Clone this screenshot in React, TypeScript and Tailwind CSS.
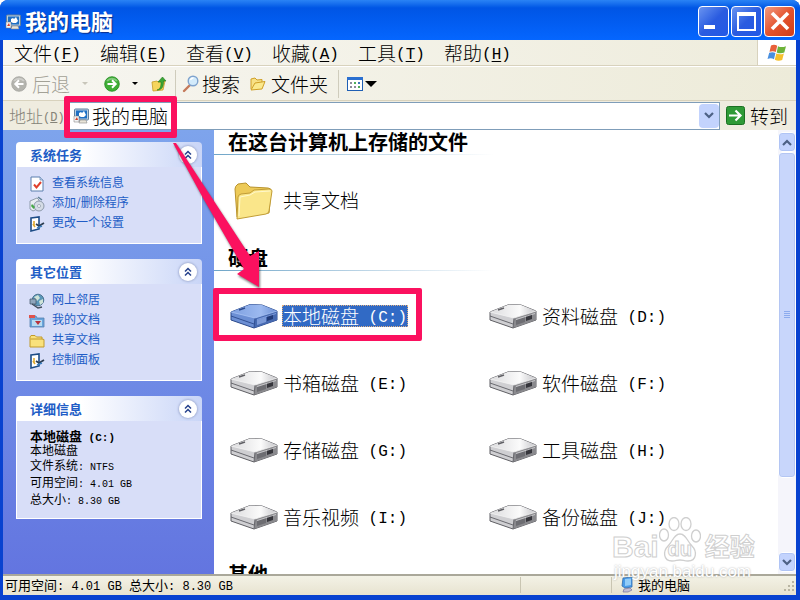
import React from "react";

const cjk = "font-['Noto_Sans_CJK_SC',sans-serif] font-light";

function Mono({ children, size = "text-[16px] align-[2px]" }: { children: React.ReactNode; size?: string }) {
  return (
    <span className={"font-['Liberation_Mono','Noto_Sans_CJK_SC',monospace] leading-none whitespace-pre " + size}>
      {children}
    </span>
  );
}

function ComputerIcon({ className }: { className: string }) {
  return (
    <svg viewBox="0 0 16 16" className={className} aria-hidden="true">
      <rect x="1.500" y="1" width="14" height="11" rx="1" fill="#b9cfe3" stroke="#5f7f9f" />
      <rect x="3" y="2.500" width="11" height="8" fill="#1d6fc4" />
      <path d="M6 5l2-1 1 1 2-2 1 2 1 2-2 2H8L6 8z" fill="#fff" />
      <path d="M7 12h6l1 3H6z" fill="#e8e4d8" stroke="#888" strokeWidth=".6" />
      <path d="M1 8h5v6H1z" fill="#f4f4f4" stroke="#777" strokeWidth=".5" />
      <path d="M2 12l2-3 1 3z" fill="#d6402b" />
    </svg>
  );
}

function RoundArrow({ green }: { green?: boolean }) {
  return (
    <svg viewBox="0 0 16 16" className="size-4 shrink-0" aria-hidden="true">
      <circle cx="8" cy="8" r="7.300" fill={green ? "#3fae36" : "#b4b4ae"} stroke={green ? "#1f8a1c" : "#a5a5a0"} strokeWidth=".8" />
      <path d="M3 5a6 5 0 0 1 10 0" stroke="#fff" strokeOpacity=".35" strokeWidth="2" fill="none" />
      <path d={green ? "M3.500 8h8M8 4.300L11.700 8 8 11.700" : "M12.500 8h-8M8 4.300L4.300 8 8 11.700"} stroke="#fff" strokeWidth="2" fill="none" />
    </svg>
  );
}

function Caret({ className, size }: { className: string; size: string }) {
  return (
    <svg viewBox="0 0 10 5" className={size + " shrink-0 " + className} aria-hidden="true">
      <path d="M0 0h10L5 5z" fill="currentColor" />
    </svg>
  );
}

function UpFolderIcon() {
  return (
    <svg viewBox="0 0 18 18" className="size-[18px] shrink-0" aria-hidden="true">
      <path d="M2 7l5-1 1 1 7-1-2 9-10 1z" fill="#f5d55c" stroke="#c59a24" strokeWidth=".8" />
      <path d="M7 15c4-1 4-5 4-8H8l4.500-5L16 6h-2.500c0 5-1 9-6.500 9z" fill="#3da637" stroke="#1e7a1c" strokeWidth=".6" />
    </svg>
  );
}

function SearchIcon() {
  return (
    <svg viewBox="0 0 18 18" className="size-[18px] shrink-0" aria-hidden="true">
      <path d="M8 10l-6 6" stroke="#c4795a" strokeWidth="2.400" strokeLinecap="round" />
      <circle cx="11" cy="6" r="4.800" fill="#d3ebfb" stroke="#7fa3cd" strokeWidth="1.400" />
      <path d="M8.500 5a3 3 0 0 1 3-2" stroke="#fff" strokeWidth="1.300" fill="none" />
    </svg>
  );
}

function OpenFolderIcon() {
  return (
    <svg viewBox="0 0 18 16" className="h-4 w-[18px] shrink-0" aria-hidden="true">
      <path d="M2 13V3l4-1 2 2 5-.500V7" fill="#f8e186" stroke="#cf9f26" />
      <path d="M2 14l4-7 10-1.500L13 13z" fill="#fbe98d" stroke="#cf9f26" />
    </svg>
  );
}

function ViewsIcon() {
  return (
    <svg viewBox="0 0 16 14" className="h-[14px] w-4 shrink-0" aria-hidden="true">
      <rect x=".5" y=".5" width="15" height="13" fill="#fff" stroke="#1f5fb4" />
      <path d="M0 0h16v3H0z" fill="#2a6fd0" />
      <path d="M3 5h2v2H3zM3 9h2v2H3zM7 9h2v2H7z" fill="#8c8c9c" />
      <path d="M7 5h2v2H7zM11 9h2v2h-2z" fill="#4fae58" />
      <path d="M11 5h2v2h-2z" fill="#3b76b8" />
    </svg>
  );
}

function WindowsFlag() {
  return (
    <svg viewBox="0 0 20 18" className="h-[18px] w-5" aria-hidden="true">
      <path d="M4 1.500c2.500-1.200 4.500-.8 6.200.2L8.800 8C7 7 5 6.800 2.500 7.800z" fill="#e8603a" />
      <path d="M11 2.200c2 1 4.500 1.400 8 0L17.300 8.500c-2.800 1.200-5.300 1-7.600-.1z" fill="#6db33a" />
      <path d="M2.200 8.800c2.500-1 4.500-.8 6.200.2L7 15.200c-2-1-4-1.300-6.500-.2z" fill="#4a8fdf" />
      <path d="M9.300 9.500c2.300 1 4.800 1.200 7.600 0L15.200 16c-2.700 1-5.200.8-7.400-.3z" fill="#f6c02d" />
    </svg>
  );
}

function Chevron({ up }: { up?: boolean }) {
  return (
    <svg viewBox="0 0 10 7" className="h-[7px] w-[10px]" aria-hidden="true">
      <path d={up ? "M1 6l4-4 4 4" : "M1 1l4 4 4-4"} stroke="#4d6185" strokeWidth="2.200" fill="none" />
    </svg>
  );
}

type TaskKind = "check" | "disc" | "panel" | "globe" | "docs" | "folder";

function TaskIcon({ kind }: { kind: TaskKind }) {
  return (
    <svg viewBox="0 0 16 16" className="size-4 shrink-0" aria-hidden="true">
      {kind === "check" && (
        <>
          <path d="M2 1h9l3 3v11H2z" fill="#fff" stroke="#5b7fae" />
          <path d="M11 1v3h3" fill="#c8d8ee" stroke="#5b7fae" strokeWidth=".7" />
          <path d="M5 8.500l2.500 3L12 6" stroke="#e0402c" strokeWidth="2" fill="none" />
        </>
      )}
      {kind === "disc" && (
        <>
          <path d="M1 5l7-3 2 2v8l-6 3-3-2z" fill="#e9eef2" stroke="#7b8a98" strokeWidth=".8" />
          <circle cx="10" cy="10" r="5" fill="#d5dce6" stroke="#7a8898" strokeWidth=".8" />
          <circle cx="10" cy="10" r="1.500" fill="#fff" stroke="#7a8898" strokeWidth=".6" />
          <path d="M3 8l3 3-1.500 2L2 10z" fill="#45a845" />
          <path d="M9 1l4 3" stroke="#5e7f94" strokeWidth="1.500" />
        </>
      )}
      {kind === "panel" && (
        <>
          <path d="M2 2l8-1v12l-8 2z" fill="#fff" stroke="#1d4c86" strokeWidth="1.600" />
          <path d="M5 5v5M4 8l2 3" stroke="#e0a92c" strokeWidth="1.600" />
          <path d="M7 8l3 2 5-3" stroke="#2d3f52" strokeWidth="1.800" fill="none" />
          <path d="M8 12l5-2" stroke="#3c80c0" strokeWidth="1.500" />
        </>
      )}
      {kind === "globe" && (
        <>
          <circle cx="9" cy="7" r="5.800" fill="#5b97b8" stroke="#3c6480" strokeWidth=".8" />
          <path d="M5 4l4-2 2 3-3 3zM10 8l4-2v4l-3 2z" fill="#cfe3d8" />
          <path d="M1 6h6v5H1z" fill="#8fa5bb" stroke="#405468" strokeWidth=".7" />
          <path d="M3 11l6 4 4-1" stroke="#444f5c" strokeWidth="1.500" fill="none" />
        </>
      )}
      {kind === "docs" && (
        <>
          <path d="M1 3h6l1 2h7v9H1z" fill="#6aa5dc" stroke="#5580ad" strokeWidth=".8" />
          <path d="M0 2h6v3H0z" fill="#e0524c" />
          <path d="M3 7h10v6H3z" fill="#b7dcf2" />
          <path d="M6 8h6l-3 4z" fill="#b8333c" />
        </>
      )}
      {kind === "folder" && (
        <path d="M1 14V4l1-1.500h4L7.500 4H13v2l2 .5V14zM1.500 6H13" fill="#f9e17c" stroke="#c19a2c" strokeLinejoin="round" />
      )}
    </svg>
  );
}

function Panel({ title, children }: { title: string; children: React.ReactNode }) {
  return (
    <section className="overflow-hidden rounded-t">
      <header className="flex h-[25px] items-center justify-between bg-linear-to-r from-white from-35% to-[#c9d5f7] pr-[5px] pl-[14px]">
        <h2 className="text-[13px] leading-5 font-bold text-[#215dc6]">{title}</h2>
        <button
          aria-label={"收起" + title}
          className="flex size-[18px] items-center justify-center rounded-full bg-white shadow-[0_0_2px_1px_#a9b5d8]"
        >
          <svg viewBox="0 0 8 10" className="h-[10px] w-2" aria-hidden="true">
            <path d="M1 4.500l3-3 3 3M1 8.500l3-3 3 3" stroke="#26418c" strokeWidth="1.500" fill="none" />
          </svg>
        </button>
      </header>
      <div className="border border-t-0 border-white bg-[#d8def8]">{children}</div>
    </section>
  );
}

function TaskList({ items }: { items: { kind: TaskKind; label: string }[] }) {
  return (
    <ul className="pt-[5px] pb-[11px] pl-3">
      {items.map((item) => (
        <li key={item.label} className="flex h-5 items-center">
          <a href="#" className="flex items-center gap-[7px] text-[12px] leading-5 font-normal text-[#215dc6]">
            <span className="pt-1"><TaskIcon kind={item.kind} /></span>
            {item.label}
          </a>
        </li>
      ))}
    </ul>
  );
}

function DriveIcon({ selected }: { selected?: boolean }) {
  const id = selected ? "drive-top-selected" : "drive-top";
  const left = selected ? "#6c8fd4" : "#cfcfd2";
  const right = selected ? "#4669b0" : "#8a8a8e";
  const line = selected ? "#2b4a8c" : "#5f5f64";
  return (
    <svg viewBox="0 0 48 26" className="h-[26px] w-12 shrink-0" aria-hidden="true">
      <defs>
        <linearGradient id={id} x1="0" y1="0" x2="1" y2="0">
          <stop offset="0" stopColor={selected ? "#7d9fe0" : "#dcdcde"} />
          <stop offset=".65" stopColor={selected ? "#9dbaf0" : "#fbfbfb"} />
          <stop offset="1" stopColor={selected ? "#6c8fd4" : "#c4c4c8"} />
        </linearGradient>
      </defs>
      <path d="M1 9L20 1.500 32 2l15 6v9l-23 8L1 17z" fill={left} stroke={line} strokeLinejoin="round" />
      <path d="M1 9L20 1.500 32 2l15 6-22 7z" fill={"url(#" + id + ")"} />
      <path d="M25 15l22-7v9l-23 8z" fill={right} />
      <path d="M27 17l9-3v5l-9 3z" fill={selected ? "#7c9ad8" : "#6d6d72"} />
      <path d="M37 13l6-2v5l-6 2z" fill={selected ? "#203a78" : "#36363c"} />
      <path d="M27 16.500l19-6" stroke={selected ? "#8dabea" : "#d8d8da"} strokeWidth=".8" />
      <path d="M25 15l-1 10M1 13l23 8" stroke={line} strokeWidth=".9" fill="none" />
      <path d="M1 9l24 6 22-7" stroke={selected ? "#aac4f5" : "#f4f4f4"} strokeWidth=".8" fill="none" />
      <path d="M9 7l6-2" stroke={line} strokeWidth="1.600" />
    </svg>
  );
}

function Drive({ name, letter, selected }: { name: string; letter: string; selected?: boolean }) {
  return (
    <button className="flex h-[67px] items-center gap-1 pl-4 text-left" aria-pressed={!!selected}>
      <DriveIcon selected={selected} />
      <span
        className={
          selected
            ? "border border-dotted border-[#e0b080] bg-[#316ac5] leading-5 whitespace-nowrap text-white"
            : "border border-transparent leading-5 whitespace-nowrap"
        }
      >
        {name}
        <Mono>{" (" + letter + ":)"}</Mono>
      </span>
    </button>
  );
}

function SectionTitle({ children }: { children: React.ReactNode }) {
  return (
    <>
      <h2 className="py-px pl-[14px] text-[20px] leading-[22px] font-bold">{children}</h2>
      <div className="h-px w-[280px] bg-linear-to-r from-[#6fa5c8] to-white" />
    </>
  );
}

const menus = [
  ["文件", "F"],
  ["编辑", "E"],
  ["查看", "V"],
  ["收藏", "A"],
  ["工具", "T"],
  ["帮助", "H"],
];

const drives = [
  ["本地磁盘", "C"],
  ["资料磁盘", "D"],
  ["书箱磁盘", "E"],
  ["软件磁盘", "F"],
  ["存储磁盘", "G"],
  ["工具磁盘", "H"],
  ["音乐视频", "I"],
  ["备份磁盘", "J"],
];

const windowButton = "flex size-[31px] items-center justify-center rounded border border-white";
const scrollButton = "flex h-5 w-full shrink-0 items-center justify-center rounded-sm border border-white bg-[#c3d3fd] shadow-[inset_0_0_0_1px_#b0c4f5]";

export default function App() {
  return (
    <div className={"relative flex h-screen flex-col overflow-hidden rounded-t-lg bg-[#0842d0] text-[19px] text-black " + cjk}>
      <header className="flex h-10 shrink-0 items-center bg-linear-to-b from-[#2a83f5] via-[#0055e5] via-20% to-[#0566ff] pr-[5px] pl-[5px]">
        <ComputerIcon className="mt-1 size-4 shrink-0" />
        <h1 className="flex-1 pl-1 text-[22px] leading-8 font-bold text-white [text-shadow:1px_1px_1px_#0a2f8c]">我的电脑</h1>
        <div className="flex gap-0.5 pt-0.5">
          <button aria-label="最小化" className={windowButton + " bg-linear-to-br from-[#6a93f0] via-[#2a5be0] to-[#2259e6]"}>
            <span className="mt-3 mr-2 h-1 w-[11px] bg-white" />
          </button>
          <button aria-label="最大化" className={windowButton + " bg-linear-to-br from-[#6a93f0] via-[#2a5be0] to-[#2259e6]"}>
            <span className="size-[19px] border-2 border-t-4 border-white" />
          </button>
          <button aria-label="关闭" className={windowButton + " bg-linear-to-br from-[#f09a80] via-[#e4532e] to-[#cf3d18]"}>
            <svg viewBox="0 0 20 20" className="size-5" aria-hidden="true">
              <path d="M2 2l16 16M18 2L2 18" stroke="#fff" strokeWidth="3.600" />
            </svg>
          </button>
        </div>
      </header>

      <div className="mr-1 mb-[5px] ml-[3px] flex min-h-0 flex-1 flex-col bg-[#efeddf]">
        <nav className="flex h-[26px] shrink-0 border-b border-[#d8d2bd] bg-linear-to-r from-[#f8f7f2] to-[#eeecdc]">
          <div className="flex flex-1 items-center gap-[19px] pl-[11px]">
            {menus.map(([label, key]) => (
              <button key={key} className="w-[67px] shrink-0 text-left leading-6 whitespace-nowrap">
                {label}
                <Mono>
                  (<u className="underline-offset-2">{key}</u>)
                </Mono>
              </button>
            ))}
          </div>
          <div className="flex w-[39px] items-center justify-center border-l border-[#d8d2bd] bg-white">
            <WindowsFlag />
          </div>
        </nav>

        <div className="flex h-[35px] shrink-0 items-center border-t border-b border-t-white border-b-[#d8d2bd] bg-linear-to-r from-[#f7f6f1] to-[#edebd9] pl-2 leading-6">
          <button disabled className="flex items-center gap-[5px] text-[#a3a196]">
            <RoundArrow />
            后退
          </button>
          <Caret className="ml-3 text-[#c8c6ba]" size="h-[3px] w-[6px]" />
          <button aria-label="前进" className="ml-4 flex items-center gap-3">
            <RoundArrow green />
            <Caret className="text-black" size="h-[3px] w-[6px]" />
          </button>
          <button aria-label="向上" className="ml-3"><UpFolderIcon /></button>
          <span className="mr-1.5 ml-[7px] h-7 w-px bg-[#cfccbc]" />
          <button className="flex items-center gap-0.5">
            <SearchIcon />
            搜索
          </button>
          <button className="ml-[9px] flex items-center gap-1">
            <OpenFolderIcon />
            文件夹
          </button>
          <span className="mr-2 ml-[10px] h-7 w-px bg-[#cfccbc]" />
          <button aria-label="查看方式" className="flex items-center gap-0.5">
            <ViewsIcon />
            <Caret className="text-black" size="h-[6px] w-3" />
          </button>
        </div>

        <div className="flex h-[29px] shrink-0 items-center bg-[#efecdf] pl-[6px] leading-6">
          <label htmlFor="address" className="w-[58px] shrink-0 text-[17px] whitespace-nowrap text-[#858378]">
            地址<Mono size="text-[12px] align-[2px]">(<u>D</u>)</Mono>
          </label>
          <div className="flex h-[28px] flex-1 items-center border border-[#7f9db9] bg-white pl-[5px]">
            <ComputerIcon className="size-4 shrink-0" />
            <input id="address" defaultValue="我的电脑" className="h-[26px] min-w-0 flex-1 pl-[3px] outline-none" />
            <button aria-label="地址列表" className="flex h-6 w-5 items-center justify-center rounded-sm bg-[#c3d3fd]">
              <Chevron />
            </button>
          </div>
          <button className="flex items-center gap-[5px] pr-2 pl-[6px]">
            <svg viewBox="0 0 19 19" className="size-[19px]" aria-hidden="true">
              <rect x=".5" y=".5" width="18" height="18" rx="2" fill="#2f9a37" stroke="#1a7022" />
              <path d="M3 9.500h11M9.500 4.500l5 5-5 5" stroke="#fff" strokeWidth="2.200" fill="none" />
            </svg>
            转到
          </button>
        </div>

        <div className="flex min-h-0 flex-1 bg-white">
          <aside className="flex w-[211px] shrink-0 flex-col gap-[15px] overflow-hidden bg-linear-to-b from-[#7ea4ec] to-[#6375e0] pt-3 pr-3 pl-[13px]">
            <Panel title="系统任务">
              <TaskList
                items={[
                  { kind: "check", label: "查看系统信息" },
                  { kind: "disc", label: "添加/删除程序" },
                  { kind: "panel", label: "更改一个设置" },
                ]}
              />
            </Panel>
            <Panel title="其它位置">
              <TaskList
                items={[
                  { kind: "globe", label: "网上邻居" },
                  { kind: "docs", label: "我的文档" },
                  { kind: "folder", label: "共享文档" },
                  { kind: "panel", label: "控制面板" },
                ]}
              />
            </Panel>
            <Panel title="详细信息">
              <div className="px-[13px] pt-2 pb-[11px] text-[12px] leading-[17px] font-normal">
                <p className="text-[13px] leading-[13px] font-bold">本地磁盘<Mono size="text-[11px]"> (C:)</Mono></p>
                <p className="leading-3">本地磁盘</p>
                <p>文件系统<Mono size="text-[10px]">: NTFS</Mono></p>
                <p>可用空间<Mono size="text-[10px]">: 4.01 GB</Mono></p>
                <p>总大小<Mono size="text-[10px]">: 8.30 GB</Mono></p>
              </div>
            </Panel>
          </aside>

          <main className="min-w-0 flex-1 overflow-hidden">
            <SectionTitle>在这台计算机上存储的文件</SectionTitle>
            <button className="flex h-[91px] items-center gap-[9px] pl-5">
              <svg viewBox="0 0 40 40" className="size-10" aria-hidden="true">
                <path d="M3 36L1 8q0-3 3-5l8-1 4 4 18 1q3 0 3 3l-2 22z" fill="#edca58" stroke="#b8932e" />
                <path d="M3 38L4 16q0-2 3-3l9-1 4-3 15-1q3 0 3 2l-3 20q0 2-3 3z" fill="#fae68a" stroke="#c29d36" strokeLinejoin="round" />
                <path d="M5 35l1-19 10-2 5-3 15-1" stroke="#fff8cc" fill="none" />
              </svg>
              共享文档
            </button>
            <SectionTitle>硬盘</SectionTitle>
            <div className="grid grid-cols-[259px_1fr] pt-[11px] pb-3">
              {drives.map(([name, letter]) => (
                <Drive key={letter} name={name} letter={letter} selected={letter === "C"} />
              ))}
            </div>
            <SectionTitle>其他</SectionTitle>
          </main>

          <div className="flex w-[18px] shrink-0 flex-col bg-[#f5f5fb] py-0.5">
            <button aria-label="向上滚动" className={scrollButton}><Chevron up /></button>
            <div className="flex w-full flex-1 flex-col">
              <div className="flex flex-[326] items-center justify-center rounded-sm border border-white bg-[#c8d6fb] shadow-[inset_0_0_0_1px_#b4c6f3]">
                <span className="flex flex-col gap-px">
                  <i className="h-px w-[6px] bg-[#8cabee]" />
                  <i className="h-px w-[6px] bg-[#8cabee]" />
                  <i className="h-px w-[6px] bg-[#8cabee]" />
                  <i className="h-px w-[6px] bg-[#8cabee]" />
                </span>
              </div>
              <div className="flex-[75]" />
            </div>
            <button aria-label="向下滚动" className={scrollButton}><Chevron /></button>
          </div>
        </div>

        <footer className="flex h-[21px] shrink-0 items-center border-t-2 border-[#aaa89a] bg-linear-to-b from-[#f3f2e6] to-[#e8e3d0] pb-0.5 pl-0.5 text-[13px] leading-[17px] font-normal">
          <p className="flex-1 whitespace-nowrap">
            可用空间<Mono size="text-[12px]">: 4.01 GB </Mono>总大小<Mono size="text-[12px]">: 8.30 GB</Mono>
          </p>
          <span className="h-4 w-[91px] border-l border-[#c9c5b2]" />
          <div className="flex h-4 w-[185px] items-center gap-1 border-l border-[#c9c5b2] pl-2">
            <svg viewBox="0 0 14 16" className="h-4 w-[14px]" aria-hidden="true">
              <path d="M3 1l9-1v10l-7 1-3-2z" fill="#4a9be8" stroke="#316cae" strokeWidth=".8" />
              <path d="M5 2l6-.5V8L5 9z" fill="#92ccf8" />
              <path d="M4 12l6-1 2 2-4 2H3z" fill="#c5c0d5" stroke="#77739a" strokeWidth=".7" />
            </svg>
            我的电脑
            <svg viewBox="0 0 12 12" className="mt-1 ml-auto size-3" aria-hidden="true">
              <path d="M8 0h2v2H8zM4 4h2v2H4zM8 4h2v2H8zM0 8h2v2H0zM4 8h2v2H4zM8 8h2v2H8z" fill="#b9b5a2" />
            </svg>
          </div>
        </footer>
      </div>

      <div className="pointer-events-none absolute top-[96px] left-[64px] h-[42px] w-[113px] rounded-xs border-[6px] border-[#fb115f]" />
      <div className="pointer-events-none absolute top-[288px] left-[213px] h-[53px] w-[209px] rounded-xs border-[6px] border-[#fb115f]" />
      <svg viewBox="0 0 100 150" className="pointer-events-none absolute top-[140px] left-[165px] h-[150px] w-[100px] drop-shadow-[1px_2px_1px_rgba(0,0,0,0.5)]" aria-hidden="true">
        <path d="M8 3h3l74 113 9-5v36l-22-13 7-5L38 58z" fill="#fb115f" />
      </svg>

      <div className="pointer-events-none absolute right-[42px] bottom-[19px] w-[146px] font-['Liberation_Sans','Noto_Sans_CJK_SC',sans-serif] text-white" aria-hidden="true">
        <div className="flex items-end whitespace-nowrap [-webkit-text-stroke:1px_#cfcfcf]">
          <span className="text-[30px] leading-8 font-bold">Bai</span>
          <span className="relative flex h-[46px] w-[42px] shrink-0 items-end justify-center">
            <svg viewBox="0 0 42 46" className="absolute inset-0 h-[46px] w-[42px]">
              <g fill="#fff" stroke="#cfcfcf" strokeWidth="1.300">
                <ellipse cx="5" cy="18" rx="4.500" ry="6" />
                <ellipse cx="15" cy="7" rx="5" ry="6.500" />
                <ellipse cx="27" cy="7" rx="5" ry="6.500" />
                <ellipse cx="37" cy="19" rx="4.500" ry="6" />
                <path d="M21 17c6 0 7 7 12 12s5 15-4 15c-4 0-5-1-8-1s-4 1-8 1c-9 0-9-10-4-15s6-12 12-12z" />
              </g>
            </svg>
            <span className="relative text-[20px] leading-7 font-bold">du</span>
          </span>
          <span className="pl-1 text-[25px] leading-8 font-bold">经验</span>
        </div>
        <p className="pl-0.5 text-[17px] leading-[18px] font-normal whitespace-nowrap [text-shadow:0_0_2px_#a8a8a8]">jingyan.baidu.com</p>
      </div>
    </div>
  );
}
